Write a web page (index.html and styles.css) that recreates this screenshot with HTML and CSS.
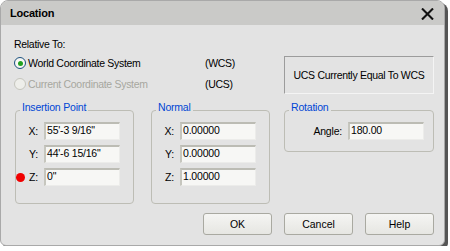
FILE: index.html
```html
<!DOCTYPE html>
<html>
<head>
<meta charset="utf-8">
<title>Location</title>
<link rel="stylesheet" href="styles.css">
</head>
<body>
<div class="window">
  <div class="titlebar">
    <span class="title">Location</span>
    <svg class="close" width="13" height="12" viewBox="0 0 13 12"><path d="M1 0.5 L12 11.5 M12 0.5 L1 11.5" stroke="#111" stroke-width="2.1" fill="none"/></svg>
  </div>
  <div class="content">
    <div class="top">
      <div class="relative">
        <div class="caption">Relative To:</div>
        <div class="radio-row">
          <span class="radio checked"></span>
          <span class="radio-label">World Coordinate System</span>
          <span class="abbr">(WCS)</span>
        </div>
        <div class="radio-row disabled">
          <span class="radio"></span>
          <span class="radio-label">Current Coordinate System</span>
          <span class="abbr">(UCS)</span>
        </div>
      </div>
      <div class="ucs-box">UCS Currently Equal To WCS</div>
    </div>
    <div class="groups">
      <div class="group group-point">
        <span class="legend">Insertion Point</span>
        <div class="fields">
          <span class="marker"></span><span class="label">X:</span><div class="field">55'-3 9/16"</div>
          <span class="marker"></span><span class="label">Y:</span><div class="field">44'-6 15/16"</div>
          <span class="marker red"></span><span class="label">Z:</span><div class="field">0"</div>
        </div>
      </div>
      <div class="group group-normal">
        <span class="legend">Normal</span>
        <div class="fields">
          <span class="marker"></span><span class="label">X:</span><div class="field">0.00000</div>
          <span class="marker"></span><span class="label">Y:</span><div class="field">0.00000</div>
          <span class="marker"></span><span class="label">Z:</span><div class="field">1.00000</div>
        </div>
      </div>
      <div class="group group-rotation">
        <span class="legend">Rotation</span>
        <div class="fields fields-rot">
          <span class="label">Angle:</span><div class="field">180.00</div>
        </div>
      </div>
    </div>
    <div class="buttons">
      <div class="button">OK</div>
      <div class="button">Cancel</div>
      <div class="button">Help</div>
    </div>
  </div>
</div>
</body>
</html>
```
FILE: styles.css
```css
* { box-sizing: border-box; }
html, body { margin: 0; padding: 0; background: #ffffff; }
body {
  font-family: "Liberation Sans", Arial, sans-serif;
  font-size: 10.5px;
  color: #000;
}
.window {
  width: 445px;
  height: 246px;
  border: 1px solid #a9a9a9;
  border-radius: 8px 8px 6px 6px;
  background: #e3e3e3;
  box-shadow: 3px 3px 0 #555555;
  overflow: hidden;
  display: flex;
  flex-direction: column;
}
.titlebar {
  height: 24px;
  background: #cacac8;
  display: flex;
  align-items: center;
  justify-content: space-between;
  padding: 0 10px 0 9px;
}
.title {
  font-weight: bold;
  font-size: 11px;
  line-height: 13px;
  letter-spacing: -0.2px;
}
.close { display: block; margin-top: 1px; }
.content {
  padding: 13px 10px 10px 13px;
  display: flex;
  flex-direction: column;
}
.top {
  display: flex;
  justify-content: space-between;
  align-items: flex-start;
}
.caption { line-height: 13px; letter-spacing: -0.3px; }
.radio-row {
  display: flex;
  align-items: center;
  height: 16px;
  margin-top: 4px;
  letter-spacing: -0.3px;
}
.radio-row + .radio-row { margin-top: 5px; }
.radio {
  width: 12px;
  height: 12px;
  border-radius: 50%;
  border: 1px solid #1c5180;
  background: radial-gradient(circle, #ffffff 0, #f0f0ea 100%);
  display: flex;
  align-items: center;
  justify-content: center;
  flex: none;
}
.radio.checked::after {
  content: "";
  width: 5px;
  height: 5px;
  border-radius: 50%;
  background: #21a121;
}
.radio-label { width: 179px; padding-left: 2px; }
.disabled .radio { border-color: #c5c5bd; background: #eeeeea; }
.disabled .radio-label { color: #a7a79f; }
.abbr { color: #000; }
.ucs-box {
  width: 150px;
  height: 38px;
  margin-top: 18px;
  border: 1px solid #9c9c9c;
  border-right-color: #f4f4f4;
  border-bottom-color: #f4f4f4;
  display: flex;
  align-items: center;
  justify-content: center;
  letter-spacing: -0.3px;
}
.groups {
  display: flex;
  align-items: flex-start;
  margin-top: 16px;
  margin-left: 1px;
}
.group {
  border: 1px solid #bdbdb5;
  border-radius: 4px;
}
.group-point { width: 119px; height: 94px; }
.group-normal { width: 119px; height: 94px; margin-left: 17px; }
.group-rotation { width: 150px; height: 42px; margin-left: 14px; }
.legend {
  display: block;
  width: fit-content;
  margin: -10px 0 0 4px;
  padding: 0 2px;
  line-height: 13px;
  background: #e3e3e3;
  color: #0046d5;
  letter-spacing: -0.2px;
}
.fields {
  display: grid;
  grid-template-columns: 9px 1fr 76px;
  grid-auto-rows: 18px;
  row-gap: 5px;
  align-items: center;
  margin-top: 8px;
  padding-right: 13px;
}
.fields-rot {
  grid-template-columns: 1fr 76px;
  padding-right: 9px;
}
.marker { width: 9px; height: 9px; }
.marker.red { border-radius: 50%; background: #f00000; }
.label { text-align: right; padding-right: 6px; letter-spacing: -0.2px; }
.field {
  height: 18px;
  background: #f7f7f5;
  border-top: 2px solid #bcbcb4;
  border-left: 2px solid #c6c6be;
  border-right: 1px solid #ececea;
  border-bottom: 1px solid #ececea;
  padding-left: 1px;
  line-height: 13px;
  letter-spacing: -0.2px;
}
.buttons {
  display: flex;
  justify-content: flex-end;
  gap: 12px;
  margin-top: 9px;
}
.button {
  width: 69px;
  height: 22px;
  border: 1px solid #a9a9a1;
  border-radius: 3px;
  background: linear-gradient(#f5f5f3, #e6e6e2);
  display: flex;
  align-items: center;
  justify-content: center;
}
```
